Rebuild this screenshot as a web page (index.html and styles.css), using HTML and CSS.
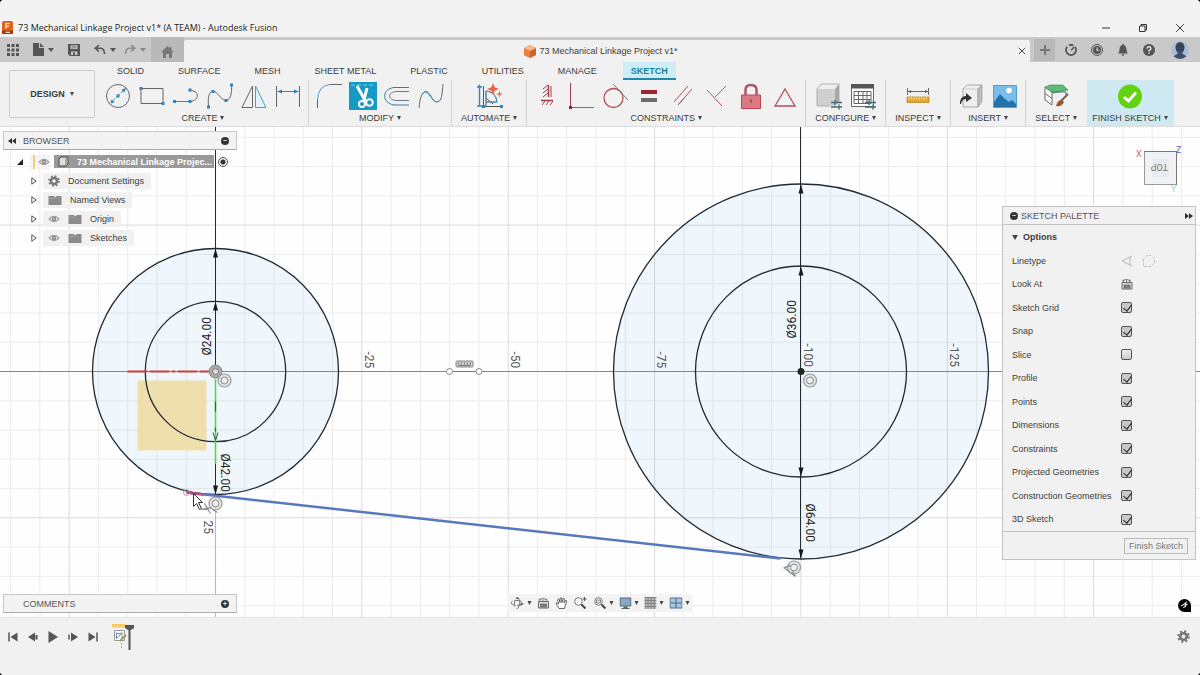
FILE: index.html
```html
<!DOCTYPE html>
<html lang="en">
<head>
<meta charset="utf-8">
<title>73 Mechanical Linkage Project v1* (A TEAM) - Autodesk Fusion</title>
<link rel="stylesheet" href="styles.css">
</head>
<body>
<svg class="defs" aria-hidden="true">
  <symbol id="eye" viewBox="0 0 12 8"><path d="M0.3 4Q6-2.6 11.7 4Q6 10.600.3 4Z" fill="#999"/><path d="M2 4Q6-.5 10 4Q6 8.500 2 4Z" fill="#eee"/><circle cx="6" cy="4" r="2.300" fill="#888"/><circle cx="6" cy="4" r=".8" fill="#eee"/></symbol>
  <symbol id="folder" viewBox="0 0 14 10"><path d="M.5 1H6l1 1.500 2-1.500h4.500V10H.5Z" fill="#8b8b8b"/><path d="M.5 3.500H6.500" stroke="#aaa" stroke-width=".8"/></symbol>
  <symbol id="twisty" viewBox="0 0 6 8"><path d="M.8.8L5.200 4L.8 7.200Z" fill="#fff" stroke="#444" stroke-width=".9"/></symbol>
  <symbol id="gear" viewBox="0 0 12 12"><g fill="none" stroke="currentColor"><circle cx="6" cy="6" r="3" stroke-width="2.400"/><circle cx="6" cy="6" r="4.800" stroke-width="2" stroke-dasharray="1.900 1.870"/></g></symbol>
  <symbol id="palettecal" viewBox="0 0 12 12"><path d="M1 4.500H11V11H1Z" fill="#ddd" stroke="#666"/><path d="M3 7h6v3H3Z" fill="#888" stroke="#555" stroke-width=".7"/><path d="M1 3L5 1.500M2.500 4V1.500M5.500 4V.8M8.500 4V1.500M6 1.500L10 3" stroke="#666" stroke-width=".8"/></symbol>
</svg>
<div class="app">
  <header class="titlebar">
    <svg class="logo" viewBox="0 0 11 13"><path d="M1.500 0H9.500Q11 0 11 1.500V12Q11 13 9.500 13H1.500Q0 13 0 12V1.500Q0 0 1.500 0Z" fill="#e3651d"/><path d="M0 9.500H11V12Q11 13 9.500 13H1.500Q0 13 0 12Z" fill="#9b3d0b"/><path d="M4 7.500V2.500H7.500M4 5H7M3.500 11.200H8" fill="none" stroke="#fff" stroke-width="1.100"/></svg>
    <h1>73 Mechanical Linkage Project v1* (A TEAM) - Autodesk Fusion</h1>
    <div class="winbuttons">
      <button aria-label="Minimize"><svg viewBox="0 0 10 10"><path d="M1 5H9"/></svg></button>
      <button aria-label="Restore"><svg viewBox="0 0 10 10"><path d="M1.500 3H7V8.500H1.500ZM3 3V1.500H8.500V7H7"/></svg></button>
      <button aria-label="Close"><svg viewBox="0 0 10 10"><path d="M1.200 1.200L8.800 8.800M8.800 1.200L1.200 8.800"/></svg></button>
    </div>
  </header>

  <div class="appbar">
    <div class="quick">
      <button aria-label="Data panel"><svg width="12" height="12" viewBox="0 0 12 12"><path d="M0 0h3v3H0zM4.500 0h3v3h-3zM9 0h3v3H9zM0 4.500h3v3H0zM4.500 4.500h3v3h-3zM9 4.500h3v3H9zM0 9h3v3H0zM4.500 9h3v3h-3zM9 9h3v3H9z" fill="#555"/></svg></button>
      <button aria-label="File"><svg width="11" height="13" viewBox="0 0 11 13"><path d="M0 0H6V5H11V13H0ZM7 0L11 4H7Z" fill="#555"/></svg><i class="caret"></i></button>
      <button aria-label="Save"><svg width="12" height="12" viewBox="0 0 12 12"><path fill-rule="evenodd" d="M0 0H12V12H2L0 10ZM2.500 1.200V5H9.500V1.200ZM3 7.500V11H5V8.500H7V11H9.300V7.500Z" fill="#555"/><path d="M3.500 2.300H8.500M3.500 3.800H8.500" stroke="#777" stroke-width=".8"/></svg></button>
      <button aria-label="Undo"><svg width="12" height="11" viewBox="0 0 12 11"><path d="M5 1L1.200 4.200L5 7.500M1.500 4.200H6.500Q10.500 4.500 10.500 10" fill="none" stroke="#555" stroke-width="1.600"/></svg><i class="caret"></i></button>
      <button aria-label="Redo" class="dim"><svg width="12" height="11" viewBox="0 0 12 11"><path d="M7 1L10.800 4.200L7 7.500M10.500 4.200H5.500Q1.500 4.500 1.500 10" fill="none" stroke="#8a8a8a" stroke-width="1.600"/></svg><i class="caret"></i></button>
    </div>
    <button class="home" aria-label="Home"><svg width="13" height="12" viewBox="0 0 13 12"><path d="M6.500 0L8.800 2.200V1H10.500V4L13 6.300H11V12H8V8H5V12H2V6.300H0Z" fill="#777"/></svg></button>
    <div class="doctab">
      <div class="docname">
        <svg width="12" height="13" viewBox="0 0 12 13"><path d="M6 0L12 3V10L6 13L0 10V3Z" fill="#f08a3c"/><path d="M0 3L6 6V13L0 10Z" fill="#e88140"/><path d="M12 3L6 6V13L12 10Z" fill="#c9652c"/><path d="M6 0L12 3L6 6L0 3Z" fill="#f9b987"/></svg>
        <span>73 Mechanical Linkage Project v1*</span>
      </div>
      <button aria-label="Close document"><svg width="8" height="8" viewBox="0 0 8 8"><path d="M.8.8L7.200 7.200M7.200.8L.8 7.200" stroke="#444" fill="none"/></svg></button>
    </div>
    <button class="newtab" aria-label="New design"><svg width="10" height="10" viewBox="0 0 10 10"><path d="M5 0V10M0 5H10" stroke="#777" stroke-width="2"/></svg></button>
    <div class="status">
      <button aria-label="Extensions"><svg width="12" height="12" viewBox="0 0 12 12"><path d="M2.200 2.800A5 5 0 1 0 9.800 2.800M4 1.300A5 5 0 0 1 8.300 1.500" fill="none" stroke="#555" stroke-width="1.900"/><path d="M6.200 6.200L9 3" stroke="#555" stroke-width="1.400"/></svg></button>
      <button aria-label="Job status"><svg width="12" height="12" viewBox="0 0 12 12"><circle cx="6" cy="6" r="5.500" fill="none" stroke="#555"/><circle cx="6" cy="6" r="4" fill="#555"/><path d="M6 3.500V6.300H8.300" fill="none" stroke="#ddd" stroke-width="1.100"/></svg></button>
      <button aria-label="Notifications"><svg width="12" height="12" viewBox="0 0 12 12"><path d="M6 0Q7 0 7 1.200Q9.500 2 9.500 5.500Q9.500 8 11 9.500H1Q2.500 8 2.500 5.500Q2.500 2 5 1.200Q5 0 6 0ZM4.500 10.200H7.500Q7 12 6 12T4.500 10.200Z" fill="#555"/></svg></button>
      <button aria-label="Help"><svg width="12" height="12" viewBox="0 0 12 12"><circle cx="6" cy="6" r="6" fill="#555"/><path d="M4 4.600Q4.200 2.800 6 2.800T8 4.500Q8 5.400 6.800 6T6 7.600M6 8.400V9.800" fill="none" stroke="#e8e8e8" stroke-width="1.400"/></svg></button>
    </div>
    <button class="avatar" aria-label="Account"><svg width="18" height="18" viewBox="0 0 18 18"><defs><clipPath id="av"><circle cx="9" cy="9" r="9"/></clipPath></defs><g clip-path="url(#av)"><path d="M0 0H18V18H0Z" fill="#a9bdd6"/><ellipse cx="9" cy="6.500" rx="4.500" ry="5.500" fill="#35445a"/><path d="M6.500 10H11.500V13Q15 13.500 16 18H2Q3 13.500 6.500 13Z" fill="#3d4f6b"/></g></svg></button>
  </div>

  <div class="ribbon">
    <button class="workspace">DESIGN <i class="caret"></i></button>
    <div class="ribbonmain">
      <nav class="tabs">
        <button>SOLID</button><button>SURFACE</button><button>MESH</button><button>SHEET METAL</button><button>PLASTIC</button><button>UTILITIES</button><button>MANAGE</button><button class="active">SKETCH</button>
      </nav>
      <div class="groups">
        <section class="group">
          <div class="tools">
            <button aria-label="Circle"><svg viewBox="0 0 28 28"><circle cx="14" cy="14" r="11.500" stroke="#666"/><path d="M7.500 20L20.500 7.500" stroke="#2f86bd" stroke-dasharray="5 1.500"/><path d="M22 6L17.500 7.500L20.500 10.500ZM6.500 21.500L7.500 17.500L10.500 20.500ZM12.500 12.500h3v3h-3Z" fill="#2f86bd"/></svg></button>
            <button aria-label="Rectangle"><svg viewBox="0 0 28 28"><path d="M3 6.500H25V21.500H3Z" stroke="#666"/><path d="M1.500 5h3v3h-3ZM23.500 20h3v3h-3Z" fill="#2f86bd"/></svg></button>
            <button aria-label="Line"><svg viewBox="0 0 28 28"><path d="M3 19.500H17.500C28 19 28 8 17.500 8.500" stroke="#666"/><path d="M3 19.500H16" stroke="#2f86bd"/><path d="M1 18h3v3h-3ZM16.500 18h3v3h-3ZM16.500 6.500h3v3h-3Z" fill="#2f86bd"/></svg></button>
            <button aria-label="Spline"><svg viewBox="0 0 28 28"><path d="M2.500 25C2 17 2 10 7 9.500S15 19 20 18.500S26 10 25.500 3" stroke="#666"/><path d="M1 23.500h3v3h-3ZM5.500 8h3v3h-3ZM18.500 17h3v3h-3ZM24 1.500h3v3h-3Z" fill="#2f86bd"/></svg></button>
            <button aria-label="Mirror"><svg viewBox="0 0 28 28"><path d="M2 25.500L12.500 4V25.500Z" stroke="#666"/><path d="M15.500 4L26 25.500H15.500Z" fill="#e2f2fa" stroke="#4c9dcc"/></svg></button>
            <button aria-label="Dimension"><svg viewBox="0 0 28 28"><path d="M2.500 4V25M25.500 4V25" stroke="#666"/><path d="M4 9.500H24" stroke="#2f86bd"/><path d="M3 9.500L8 7.500V11.500ZM25 9.500L20 7.500V11.500Z" fill="#2f86bd"/></svg></button>
          </div>
          <button class="label">CREATE <i class="caret"></i></button>
        </section>
        <section class="group">
          <div class="tools">
            <button aria-label="Fillet"><svg viewBox="0 0 28 28"><path d="M2.500 26V18" stroke="#666"/><path d="M2.500 18Q3 3.500 15 2.500" stroke="#4c9dcc"/><path d="M15 2.500H27" stroke="#666"/></svg></button>
            <button class="selected" aria-label="Trim"><svg viewBox="0 0 28 28"><path d="M2 3H26" stroke="#7ad4ee" stroke-dasharray="4 2"/><path d="M8 4L17 20M18 6L14.500 20" stroke="#fff" stroke-width="3"/><circle cx="13" cy="22" r="3" stroke="#fff" stroke-width="2"/><circle cx="20.500" cy="20.500" r="3.300" stroke="#fff" stroke-width="2"/></svg></button>
            <button aria-label="Offset"><svg viewBox="0 0 28 28"><path d="M26 5.500H11C-1.500 7-1.500 21 11 23H26" stroke="#347da6"/><path d="M26 9.500H13C4.500 10.500 4.500 17.500 13 18.500H26" stroke="#777"/></svg></button>
            <button aria-label="Curvature"><svg viewBox="0 0 28 28"><path d="M2 26C3 15 5 10 9 9.500S15 20 20 20S25 12 26 2" stroke="#666"/><path d="M6 11.500Q8 8.500 11 11.500L16 18Q19 21.500 22.500 18.500" stroke="#4c9dcc"/></svg></button>
          </div>
          <button class="label">MODIFY <i class="caret"></i></button>
        </section>
        <section class="group">
          <div class="tools">
            <button aria-label="AutoConstrain"><svg viewBox="0 0 28 28"><path d="M4.500 5V24M2 5H7M2 24H7" stroke="#2f86bd" stroke-width="1.400"/><path d="M8.500 4V24.500H27M11 24V9Q21 10 22 20H11M11 16L18 22" stroke="#555"/><path d="M11 9Q21 10 22 20H11Z" stroke="#4c9dcc"/><path d="M3 5L4.500 2L6 5Z M7 23h3v3h-3ZM25 23h3v3h-3Z" fill="#2f86bd"/><path d="M18 1L19.700 5.300L24 7L19.700 8.700L18 13L16.300 8.700L12 7L16.300 5.300ZM24.500 8.500L25.300 11.200L28 12L25.300 12.800L24.500 15.500L23.700 12.800L21 12L23.700 11.200Z" fill="#ef6544"/></svg></button>
          </div>
          <button class="label">AUTOMATE <i class="caret"></i></button>
        </section>
        <section class="group">
          <div class="tools">
            <button aria-label="Horizontal/Vertical"><svg viewBox="0 0 28 28"><path d="M15.500 3V15M8 18.500H20" stroke="#a33b46" stroke-width="1.400"/><path d="M15 3L10 7M15 7L10 11M15 11L10 15M12 19L9 23M16 19L13 23M20 19L17 23M18 4V15" stroke="#a33b46"/></svg></button>
            <button aria-label="Coincident"><svg viewBox="0 0 28 28"><path d="M3.500 1V25" stroke="#a33b46"/><path d="M3.500 25.500H27" stroke="#777"/><path d="M2 24h3v3h-3Z" fill="#a02030"/></svg></button>
            <button aria-label="Tangent"><svg viewBox="0 0 28 28"><circle cx="12.500" cy="16" r="9.500" stroke="#b44e59" stroke-width="1.300"/><path d="M12 2L27 18" stroke="#777"/></svg></button>
            <button aria-label="Equal"><svg viewBox="0 0 28 28"><path d="M6 8H22V12H6Z" fill="#9c2633"/><path d="M6 16H22V20H6Z" fill="#6b6b6b"/></svg></button>
            <button aria-label="Parallel"><svg viewBox="0 0 28 28"><path d="M5 20L19 4M9 23L23 7" stroke="#b44e59"/><path d="M9 23L16 15" stroke="#777"/></svg></button>
            <button aria-label="Perpendicular"><svg viewBox="0 0 28 28"><path d="M4 8L19 24" stroke="#b44e59"/><path d="M12 15L23 4" stroke="#777"/></svg></button>
            <button aria-label="Fix"><svg viewBox="0 0 28 28"><path d="M8.500 13V8Q8.500 3 14 3T19.500 8V13" stroke="#a85a62" stroke-width="2.500"/><path d="M4.500 13H23.500V26.500H4.500Z" fill="#dc7a84" stroke="#bd4452"/><path d="M14 17V21" stroke="#8d2935"/></svg></button>
            <button aria-label="Midpoint"><svg viewBox="0 0 28 28"><path d="M14 7L24 24H4Z" stroke="#b44e59" stroke-width="1.300"/></svg></button>
          </div>
          <button class="label">CONSTRAINTS <i class="caret"></i></button>
        </section>
        <section class="group">
          <div class="tools">
            <button aria-label="Configure"><svg viewBox="0 0 28 28"><path d="M2 7L6 2H24L20 7V24H2Z" fill="#cfcfcf"/><path d="M2 7L6 2H24L20 7Z" fill="#eee"/><path d="M20 7L24 2V19L20 24Z" fill="#a8a8a8"/><path d="M2 7L6 2H24V20M2 7V24H15" stroke="#999" stroke-width=".7"/><path d="M16 20.500H27M16 25H27" stroke="#4a646e" stroke-width="1.400"/><path d="M20 18v5M24 22.500v5" stroke="#397d83" stroke-width="1.500"/></svg></button>
            <button aria-label="Table"><svg viewBox="0 0 28 28"><path d="M2.500 3.500H24.500V24.500H2.500Z" fill="#fff" stroke="#666"/><path d="M2 2H25V6.500H2Z" fill="#555"/><path d="M5 9.500H22V21.500H5ZM5 13.500H22M5 17.500H22M9.500 9.500V21.500M14 9.500V21.500M18 9.500V21.500" stroke="#666"/><path d="M16 20.500H27M16 25H27" stroke="#4a646e" stroke-width="1.400"/><path d="M20 18v5M24 22.500v5" stroke="#397d83" stroke-width="1.500"/></svg></button>
          </div>
          <button class="label">CONFIGURE <i class="caret"></i></button>
        </section>
        <section class="group">
          <div class="tools">
            <button aria-label="Measure"><svg viewBox="0 0 28 28"><path d="M3.500 6V13M24.500 6V13M4 9.500H24" stroke="#666"/><path d="M4 9.500L7 8V11ZM24 9.500L21 8V11Z" fill="#555"/><path d="M3 15H25V20.500H3Z" fill="#e7a632" stroke="#b87a16" stroke-width=".7"/><path d="M5 15V18M7.500 15V17M10 15V18M12.500 15V17M15 15V18M17.500 15V17M20 15V18M22.500 15V17" stroke="#fff0b8" stroke-width=".8"/></svg></button>
          </div>
          <button class="label">INSPECT <i class="caret"></i></button>
        </section>
        <section class="group">
          <div class="tools">
            <button aria-label="Insert derive"><svg viewBox="0 0 28 28"><path d="M6 7L10 3H25L21 7V25H6Z" fill="#eee" stroke="#888" stroke-width=".7"/><path d="M21 7L25 3V20L21 25Z" fill="#bbb" stroke="#999" stroke-width=".6"/><path d="M6 7H21" stroke="#bbb" stroke-width=".6"/><path d="M3 22Q3 14 9 14V11L15 16L9 20V17Q5 17 4 22Z" fill="#333"/></svg></button>
            <button aria-label="Canvas"><svg viewBox="0 0 28 28"><path d="M2.500 3.500H25.500V25.500H2.500Z" fill="#79bde9" stroke="#4f9fd3"/><path d="M3 20L9 12L14 17L18 20L21 18L25 22V25H3Z" fill="#2572aa"/><circle cx="18" cy="8.500" r="2.800" fill="#fff"/></svg></button>
          </div>
          <button class="label">INSERT <i class="caret"></i></button>
        </section>
        <section class="group">
          <div class="tools">
            <button aria-label="Select"><svg viewBox="0 0 28 28"><path d="M3 5L10 10V23L3 18Z" fill="#fff" stroke="#666"/><path d="M3 11.500L10 16.500" stroke="#666"/><path d="M3 5L8 3H21L26 8L11 11Z" fill="#5dbb76" stroke="#3b9659" stroke-width=".7"/><path d="M10 10H24V13" stroke="#666"/><path d="M26 12L19 19" stroke="#666" stroke-width="2"/><path d="M20 18Q16 17 14 24Q20 25 22 20Z" fill="#9b5825"/></svg></button>
          </div>
          <button class="label">SELECT <i class="caret"></i></button>
        </section>
        <section class="group finish">
          <div class="tools">
            <button aria-label="Finish Sketch"><svg viewBox="0 0 28 28"><circle cx="14" cy="14.500" r="12" fill="#62d312"/><path d="M8 15L12.500 19L20 10.500" stroke="#fff" stroke-width="3"/></svg></button>
          </div>
          <button class="label">FINISH SKETCH <i class="caret"></i></button>
        </section>
      </div>
    </div>
  </div>

  <main class="canvas">
    <svg class="sketch" aria-label="Sketch of two wheels">
      <defs>
        <pattern id="minor" x="215" y="244" width="29.270" height="29.270" patternUnits="userSpaceOnUse"><path d="M0 .5H29.270M.5 0V29.270" stroke="#000" stroke-opacity=".07" fill="none"/></pattern>
        <pattern id="major" x="215" y="244" width="146.350" height="146.350" patternUnits="userSpaceOnUse"><path d="M.5 0V146.350M0 .5H146.350" stroke="#000" stroke-opacity=".07" fill="none"/></pattern>
        <g id="conc" fill="none" stroke="#999"><circle r="6.500" fill="#ddd" fill-opacity=".7" stroke-width="1.200"/><circle r="3.500" fill="#eee" stroke="#888"/></g>
        <path id="up" d="M0 0L2.500 9H-2.500Z"/>
      </defs>
      <rect width="100%" height="100%" fill="#fefefe"/>
      <g transform="translate(215.500 244.500)">
        <circle r="123" fill="#eff7fc"/>
        <circle cx="585.500" r="187.500" fill="#eff7fc"/>
      </g>
      <rect width="100%" height="100%" fill="url(#minor)"/>
      <rect width="100%" height="100%" fill="url(#major)"/>
      <rect x="215" y="368" width="1" height="100%" fill="#86dc86"/>
      <rect y="244" width="100%" height="1" fill="#d2686f"/>
      <g transform="translate(215.500 244.500)">
        <rect x="-78" y="9" width="69" height="70" fill="#efdca2" fill-opacity=".88"/>
        <g fill="none" stroke="#222b33" stroke-width="1.300">
          <circle r="70.200"/><circle r="123"/>
          <circle cx="585.500" r="105.500"/><circle cx="585.500" r="187.500"/>
        </g>
        <path d="M0-250V0M0 92V123M585-250V187" fill="none" stroke="#222b33"/>
        <path d="M0 8V92" stroke="#45df35" stroke-width="1.500"/>
        <path d="M0 30V40M0 56V60" stroke="#27702c" stroke-width="1.200"/>
        <g fill="#15191c">
          <use href="#up" y="-123"/><use href="#up" y="-70"/><use href="#up" x="585.500" y="-187"/><use href="#up" x="585.500" y="-105"/>
          <use href="#up" transform="translate(0 123) rotate(180)"/><use href="#up" transform="translate(585.500 105) rotate(180)"/><use href="#up" transform="translate(585.500 187) rotate(180)"/>
        </g>
        <path d="M-2.500 61L0 69L2.500 61" fill="none" stroke="#20612a"/>
        <path d="M-88 0H-5" stroke="#d43a35" stroke-width="2" stroke-dasharray="20 2 20 2 4 2"/>
        <path d="M-29 121L565 187" stroke="#5878be" stroke-width="2.500"/>
        <path d="M-29 121L-12 123" stroke="#bd4879" stroke-width="2.500"/>
        <circle cx="-29" cy="121" r="3" fill="none" stroke="#c794ac"/>
        <circle r="6.500" fill="#aaa" stroke="#888"/><circle r="3" fill="#ddd" stroke="#777"/>
        <use href="#conc" x="9" y="9"/>
        <circle cx="585.500" r="3.500" fill="#1c2a18"/>
        <use href="#conc" x="594.500" y="9"/>
        <g fill="none" stroke="#8d979d"><use href="#conc" x="0" y="132"/><path d="M-14 138L-4 136M-11 132L-5 142M-3 138L2 141" stroke-width="1.300"/><use href="#conc" x="578.500" y="196"/><path d="M568 196L580 205M569 196L575 194M577 200L580 205" stroke-width="1.500"/></g>
        <path d="M-22 122V135L-19 132L-16 138L-14 137L-17 131H-13Z" fill="#fff" stroke="#333"/>
        <path d="M237 0H261" stroke="#777"/>
        <circle cx="234" r="3" fill="#fff" stroke="#888"/><circle cx="263.500" r="3" fill="#fff" stroke="#888"/>
        <rect x="240.500" y="-10.500" width="17" height="6" rx="1" fill="#ccc" stroke="#888"/><path d="M243-9V-7M246-9V-7M249-9V-7M252-9V-7M255-9V-7M243-6H255" stroke="#777"/>
        <g class="dims">
          <text transform="translate(-5 -16) rotate(-90)">Ø24.00</text>
          <text transform="translate(5 82) rotate(90)">Ø42.00</text>
          <text transform="translate(580 -33) rotate(-90)">Ø36.00</text>
          <text transform="translate(590 132) rotate(90)">Ø64.00</text>
        </g>
        <g class="ticks">
          <text transform="translate(149 -20) rotate(90)">-25</text>
          <text transform="translate(295 -20) rotate(90)">-50</text>
          <text transform="translate(441 -20) rotate(90)">-75</text>
          <text transform="translate(588 -28) rotate(90)">-100</text>
          <text transform="translate(734 -28) rotate(90)">-125</text>
          <text transform="translate(-12 149) rotate(90)">25</text>
        </g>
      </g>
    </svg>

    <aside class="browser">
      <header class="panelhead">
        <svg width="8" height="6" viewBox="0 0 8 6"><path d="M4 0V6L0 3ZM8 0V6L4 3Z" fill="#333"/></svg>
        <h2>BROWSER</h2>
        <button class="dot" aria-label="Collapse">−</button>
      </header>
      <ul class="tree">
        <li class="root">
          <svg width="6" height="6" viewBox="0 0 6 6"><path d="M6 0V6H0Z" fill="#222"/></svg>
          <span class="rootmark"><i class="bar"></i><svg width="12" height="8"><use href="#eye"/></svg></span>
          <span class="rootname"><svg width="11" height="11" viewBox="0 0 11 11"><path d="M1 3L3 1H10V8L8 10H1Z" fill="#ddd" stroke="#444"/><path d="M8 10V3L10 1" fill="none" stroke="#777"/></svg>73 Mechanical Linkage Projec...</span>
          <input type="radio" checked aria-label="Activate component">
        </li>
        <li><svg width="6" height="8"><use href="#twisty"/></svg><span class="node"><svg class="gearicon" width="12" height="12"><use href="#gear"/></svg>Document Settings</span></li>
        <li><svg width="6" height="8"><use href="#twisty"/></svg><span class="node"><svg width="14" height="10"><use href="#folder"/></svg>Named Views</span></li>
        <li><svg width="6" height="8"><use href="#twisty"/></svg><span class="node"><svg width="12" height="8"><use href="#eye"/></svg><svg width="14" height="10"><use href="#folder"/></svg>Origin</span></li>
        <li><svg width="6" height="8"><use href="#twisty"/></svg><span class="node"><svg width="12" height="8"><use href="#eye"/></svg><svg width="14" height="10"><use href="#folder"/></svg>Sketches</span></li>
      </ul>
    </aside>

    <div class="comments panelhead">
      <h2>COMMENTS</h2>
      <button class="dot" aria-label="Add comment">+</button>
    </div>

    <div class="viewcube">
      <svg width="52" height="56" viewBox="0 0 52 56"><path d="M12.500 9.500H44.500V42.500H12.500Z" fill="#f1f2f4" stroke="#999"/><path d="M20 17H37V35H20Z" fill="#e7eaee"/><path d="M12 9.500H45M44.500 9V43" stroke="#777"/><text x="4" y="15" fill="#c4697b" class="axis">X</text><text x="44" y="11" fill="#6464c8" class="axis">Z</text><text x="39" y="50" fill="#9ce09c" class="axis">Y</text><text transform="translate(36 22) rotate(180)" class="face">TOP</text></svg>
    </div>

    <aside class="palette">
      <header class="palettehead"><i class="dot">−</i><h2>SKETCH PALETTE</h2><svg width="8" height="6" viewBox="0 0 8 6"><path d="M0 0L4 3L0 6ZM4 0L8 3L4 6Z" fill="#333"/></svg></header>
      <div class="options">
        <h3><i class="caret"></i>Options</h3>
        <div class="row"><span>Linetype</span><span class="linetypes"><svg width="12" height="12" viewBox="0 0 12 12"><path d="M11 1L1 6L11 11M9 2V10" fill="none" stroke="#b5b5b5"/></svg><svg width="12" height="12" viewBox="0 0 12 12"><path d="M.5 4V11.500H8L11.500 8V4L8 .5H4Z" fill="none" stroke="#c4c4c4" stroke-dasharray="3 1"/></svg></span></div>
        <div class="row"><span>Look At</span><svg width="12" height="12"><use href="#palettecal"/></svg></div>
        <label class="row"><span>Sketch Grid</span><input type="checkbox" checked></label>
        <label class="row"><span>Snap</span><input type="checkbox" checked></label>
        <label class="row"><span>Slice</span><input type="checkbox"></label>
        <label class="row"><span>Profile</span><input type="checkbox" checked></label>
        <label class="row"><span>Points</span><input type="checkbox" checked></label>
        <label class="row"><span>Dimensions</span><input type="checkbox" checked></label>
        <label class="row"><span>Constraints</span><input type="checkbox" checked></label>
        <label class="row"><span>Projected Geometries</span><input type="checkbox" checked></label>
        <label class="row"><span>Construction Geometries</span><input type="checkbox" checked></label>
        <label class="row"><span>3D Sketch</span><input type="checkbox" checked></label>
      </div>
      <footer><button>Finish Sketch</button></footer>
    </aside>

    <div class="navbar">
      <button aria-label="Orbit"><svg width="14" height="12" viewBox="0 0 14 12"><g fill="none" stroke="#777"><ellipse cx="6.500" cy="6" rx="6" ry="2.500" stroke-dasharray="7 2"/><ellipse cx="6.500" cy="6" rx="2.500" ry="5.500" stroke-dasharray="7 2"/></g><path d="M10 5l3 2-3 2ZM5 2l2-2 2 2Z" fill="#666"/></svg><i class="caret"></i></button>
      <button aria-label="Look At"><svg width="12" height="12"><use href="#palettecal"/></svg></button>
      <button aria-label="Pan"><svg width="12" height="12" viewBox="0 0 12 12"><path d="M3.500 11.500Q1 8 .6 6Q1.300 5 3 7L2.200 2.500Q3 1.300 3.800 2.500L4.500 5.500L4.600 1Q5.500.2 6.200 1L6.500 5.500L7.500 1.500Q8.500 1 9 2L8.500 6L10 3.500Q11 3.200 11.300 4L9.500 9.500L9 11.500Z" fill="#fff" stroke="#555" stroke-width=".9"/></svg></button>
      <button aria-label="Zoom"><svg width="14" height="12" viewBox="0 0 14 12"><circle cx="5" cy="4.500" r="3.800" fill="#f7f7f7" stroke="#777"/><path d="M8 7.500L12 11.500" stroke="#444" stroke-width="2"/><path d="M11 0V4M9 2H13" stroke="#555"/></svg></button>
      <button aria-label="Fit"><svg width="13" height="12" viewBox="0 0 13 12"><circle cx="5" cy="4.500" r="3.800" fill="#f7f7f7" stroke="#777"/><path d="M3 3H7V6H3Z" fill="#ddd" stroke="#888"/><path d="M8 7.500L12 11.500" stroke="#444" stroke-width="2"/></svg><i class="caret"></i></button>
      <button aria-label="Display settings"><svg width="12" height="12" viewBox="0 0 12 12"><path d="M.5 1H11.500V9H.5Z" fill="#8ba7c7" stroke="#556677"/><path d="M4 9.500H8V11H10V12H2V11H4Z" fill="#566"/></svg><i class="caret"></i></button>
      <button aria-label="Grid and snaps"><svg width="12" height="12" viewBox="0 0 12 12"><path d="M0 0H12V12H0Z" fill="#bbb"/><path d="M0 .5H12M0 3.500H12M0 6.500H12M0 9.500H12M.5 0V12M3.500 0V12M6.500 0V12M9.500 0V12" stroke="#777" stroke-width=".8"/></svg><i class="caret"></i></button>
      <button aria-label="Viewports"><svg width="13" height="12" viewBox="0 0 13 12"><path d="M.5 1H12.500V11H.5Z" fill="#a8c5e3" stroke="#567089"/><path d="M6.500 1V11M1 6H12" stroke="#456684"/></svg><i class="caret"></i></button>
    </div>
    <button class="assistant" aria-label="Assistant"><svg width="13" height="13" viewBox="0 0 13 13"><path d="M6.500 0A6.500 6.500 0 0 1 13 6.500V13H6.500A6.500 6.500 0 0 1 6.500 0Z" fill="#000"/><path d="M3 7L5 6L8 3.500L7 7L9.500 5M5 8.500L8 7.500" stroke="#ddd" fill="none" stroke-width="1.100"/></svg></button>
  </main>

  <footer class="timeline">
    <div class="playback">
      <button aria-label="Go to start"><svg viewBox="0 0 12 12"><path d="M2 1.500V10.500" stroke="#555" stroke-width="1.500"/><path d="M10.500 1.500V10.500L3.500 6Z" fill="#555"/></svg></button>
      <button aria-label="Step back"><svg viewBox="0 0 12 12"><path d="M8 1.500V10.500L1 6Z" fill="#555"/><path d="M9.500 4V8.500" stroke="#555" stroke-width="2"/></svg></button>
      <button aria-label="Play"><svg viewBox="0 0 12 12"><path d="M1.500 0V12L11 6Z" fill="#555"/></svg></button>
      <button aria-label="Step forward"><svg viewBox="0 0 12 12"><path d="M4 1.500V10.500L11 6Z" fill="#555"/><path d="M2 3.500V8.500" stroke="#555" stroke-width="1.500"/></svg></button>
      <button aria-label="Go to end"><svg viewBox="0 0 12 12"><path d="M10 1.500V10.500" stroke="#555" stroke-width="1.500"/><path d="M1.500 1.500V10.500L8.500 6Z" fill="#555"/></svg></button>
    </div>
    <button class="feature" aria-label="Sketch1"><svg width="24" height="27" viewBox="0 0 24 27"><path d="M1 1H14V4.500H1Z" fill="#f4c65a"/><path d="M3 2V4M6 2V4M9 2V4M12 2V4" stroke="#fce9b4"/><path d="M3.500 7.500H13.500V17.500H3.500Z" fill="#fff" stroke="#999"/><path d="M5.500 9.500V16M5 10.500H11M6 15.500L11 9.500V15" stroke="#6f8fb0" fill="none"/><path d="M15 12L9 18" stroke="#bd9055" stroke-width="2"/><path d="M10.500 20V26" stroke="#aaa" stroke-dasharray="2 1"/><path d="M14 2H23V5L20 7H17L14 5Z" fill="#555"/><path d="M18.500 5V27" stroke="#555" stroke-width="2"/></svg></button>
    <button class="settings" aria-label="Timeline settings"><svg class="gearicon" width="13" height="13"><use href="#gear"/></svg></button>
  </footer>
</div>
</body>
</html>
```
FILE: styles.css
```css
* { box-sizing: border-box; }
html { background: #000; }
body { margin: 0; font: 9px/12px "Liberation Sans", Arial, sans-serif; color: #3c3c3c; }
h1, h2, h3, ul { margin: 0; padding: 0; font-size: inherit; font-weight: normal; list-style: none; }
button { margin: 0; padding: 0; border: 0; background: none; color: inherit; font: inherit; }
svg { flex: none; display: block; }
.defs { position: absolute; width: 0; height: 0; }
.caret { flex: none; width: 0; height: 0; border: 2px solid transparent; border-top: 4px solid #444; border-bottom: 0; }

.app { display: flex; flex-direction: column; min-height: 100vh; border-radius: 4px; overflow: hidden; background: #f1f1f1; }

.titlebar { display: flex; align-items: center; gap: 5px; height: 37px; padding: 18px 15px 0 2px; color: #222; background: #f3f3f3; }
.titlebar h1 { flex: 1; font: 9px/14px "Open Sans", "Noto Sans", sans-serif; }
.logo { width: 11px; height: 13px; }
.winbuttons { display: flex; gap: 27px; }
.winbuttons svg { width: 10px; height: 10px; fill: none; stroke: #333; }

.appbar { display: flex; align-items: center; height: 25px; background: #c9c9c9; }
.quick { display: flex; flex: none; align-items: center; gap: 14px; width: 151px; padding-left: 7px; }
.quick button { display: flex; align-items: center; gap: 4px; }
.quick .caret { border-width: 4px 3px 0; border-top-color: #555; }
.quick .dim .caret { border-top-color: #8a8a8a; }
.quick button:nth-child(4) { margin-right: -6px; }
.home { display: flex; align-items: center; justify-content: center; width: 33px; height: 25px; padding-top: 4px; background: #b9b9b9; }
.doctab { display: flex; flex: 1; align-self: flex-end; align-items: center; height: 22px; padding-right: 4px; background: #f1f1f1; border-radius: 2px 2px 0 0; }
.docname { display: flex; flex: 1; align-items: center; justify-content: center; gap: 3px; }
.newtab { display: flex; align-items: center; justify-content: center; width: 21px; height: 22px; margin-left: 4px; background: #b9b9b9; }
.status { display: flex; gap: 14px; padding: 0 16px 0 10px; }
.avatar { padding-right: 11px; }

.ribbon { display: flex; align-items: flex-start; height: 65px; border-bottom: 1px solid #dcdcdc; }
.workspace { display: flex; flex: none; align-items: center; justify-content: center; gap: 5px; width: 86px; height: 48px; margin: 8px 0 0 9px; border: 1px solid #ccc; border-radius: 2px; font-weight: bold; }
.ribbonmain { flex: 1; margin-left: 3px; }
.tabs { display: flex; gap: 34px; height: 18px; padding-left: 19px; }
.tabs button { padding-top: 1px; border-bottom: 2px solid transparent; }
.tabs .active { margin: 0 -8px; padding: 1px 8px 0; color: #16819f; background: #cfedf7; border-bottom-color: #2389a8; font-weight: bold; }
.groups { display: flex; }
.group { display: flex; flex-direction: column; align-items: center; height: 46px; padding-top: 2px; border-right: 1px solid #d4d4d4; }
.group:nth-last-child(-n+2) { border-right-color: transparent; }
.tools { display: flex; gap: 6px; padding: 0 6px; }
.tools svg { width: 28px; height: 28px; fill: none; }
.tools .selected { background: #1799c6; }
.label { display: flex; align-items: center; gap: 3px; height: 16px; padding: 0 9px; white-space: nowrap; }
.finish { background: #cfe9f2; }
.finish .label { padding: 0 5px; }

.canvas { position: relative; flex: 1; min-height: 490px; background: #fefefe; }
.sketch { position: absolute; inset: 0; width: 100%; height: 100%; }
.dims { font: 12px Roboto, sans-serif; fill: #222; }
.ticks { font: 12px Roboto, sans-serif; fill: #555; }

.browser { position: absolute; left: 3px; top: 4px; width: 234px; }
.panelhead { display: flex; align-items: center; height: 19px; padding: 0 7px 0 4px; background: #f3f3f3; border: 1px solid #c8c8c8; border-bottom-color: #aaa; color: #555; }
.panelhead h2 { flex: 1; padding-left: 7px; }
.comments { position: absolute; left: 3px; bottom: 4px; width: 234px; padding-left: 12px; }
.dot { display: flex; align-items: center; justify-content: center; width: 8px; height: 8px; border-radius: 50%; background: #333; color: #ddd; font: bold 8px/8px Roboto, sans-serif; }
.tree { padding: 2px 0 0 28px; }
.tree li { display: flex; align-items: center; gap: 6px; height: 19px; }
.node { display: flex; align-items: center; gap: 8px; height: 16px; padding: 0 7px 0 5px; background: #f1f1f1; }
.gearicon { color: #777; }
.tree .root { gap: 7px; margin-left: -14px; }
.rootmark { display: flex; align-items: center; gap: 3px; height: 14px; padding-left: 3px; background: #f3f3f3; }
.bar { width: 2px; height: 14px; background: #edcf7c; }
.rootname { display: flex; align-items: center; gap: 8px; width: 160px; height: 13px; margin-left: -3px; padding-left: 4px; background: #999; color: #fff; font-weight: bold; white-space: nowrap; overflow: hidden; }
.root input { appearance: none; flex: none; width: 10px; height: 10px; margin: 0 0 0 -3px; border: 1px solid #555; border-radius: 50%; background: radial-gradient(#333 2px, #eee 3px); }

.viewcube { position: absolute; right: 16px; top: 15px; }
.axis { font: 9px Roboto, sans-serif; }
.face { font: 9px Roboto, sans-serif; fill: #777; }

.palette { position: absolute; right: 4px; top: 79px; width: 194px; background: #f1f1f1; border: 1px solid #c4c4c4; }
.palettehead { display: flex; align-items: center; gap: 3px; height: 18px; padding: 0 2px 0 7px; border-bottom: 1px solid #c4c4c4; color: #555; }
.palettehead h2 { flex: 1; }
.palette h3 { display: flex; align-items: center; gap: 5px; height: 24px; font-weight: bold; }
.palette h3 .caret { border-width: 5px 3px 0; }
.options { display: grid; grid-template-rows: 24px; grid-auto-rows: 1fr; min-height: 306px; padding: 0 9px; }
.row { display: grid; grid-template-columns: 109px 1fr; align-items: center; white-space: nowrap; }
.linetypes { display: flex; gap: 10px; }
.row input { appearance: none; width: 11px; height: 11px; margin: 0; border: 1px solid #555; border-radius: 2px; background: linear-gradient(#eee, #ccc); }
.row input:checked { background: #c9c9c9; }
.row input:checked::before { content: ""; display: block; width: 4px; height: 7px; margin: 0 0 0 3px; border: solid #222; border-width: 0 1px 1px 0; transform: rotate(38deg); }
.palette footer { display: flex; justify-content: flex-end; padding: 6px 7px 5px; border-top: 1px solid #c4c4c4; }
.palette footer button { height: 16px; padding: 0 4px; border: 1px solid #bbb; color: #777; }

.navbar { position: absolute; left: 50%; bottom: 5px; display: flex; align-items: center; gap: 6px; height: 18px; padding: 0 3px; background: #f3f3f3; transform: translateX(-50%); }
.navbar button { display: flex; align-items: center; gap: 3px; }
.assistant { position: absolute; right: 9px; bottom: 5px; }

.timeline { display: flex; align-items: center; height: 58px; padding: 0 10px 20px 7px; background: #f1f1f1; border-top: 1px solid #e4e4e4; }
.playback { display: flex; gap: 8px; }
.playback svg { width: 12px; height: 12px; }
.feature { margin-left: 12px; }
.settings { margin-left: auto; }
```
